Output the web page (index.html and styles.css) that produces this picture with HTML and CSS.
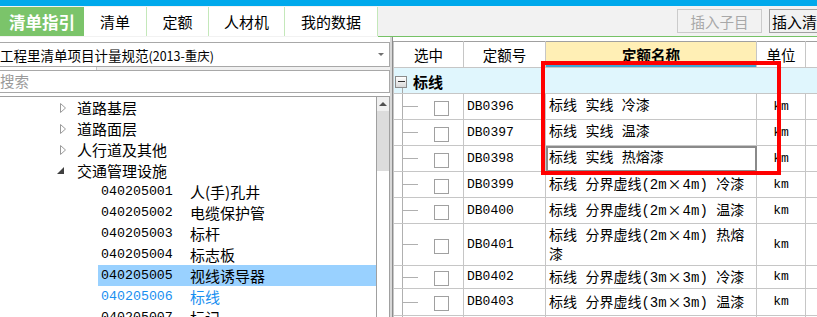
FILE: index.html
```html
<!DOCTYPE html>
<html lang="zh-CN">
<head>
    <meta charset="UTF-8">
    <title>清单指引</title>
    <link rel="stylesheet" href="styles.css">
</head>
<body>
    <div class="titlebar"></div>
    <div class="tabbar">
        <div class="tab tab-active">清单指引</div>
        <div class="tab tab-w63">清单</div>
        <div class="tab tab-w62">定额</div>
        <div class="tab tab-w76">人材机</div>
        <div class="tab tab-w93">我的数据</div>
        <div class="toolbar">
            <button class="btn btn-off" disabled>插入子目</button>
            <button class="btn btn-cut">插入清单</button>
        </div>
    </div>

    <div class="main">
        <div class="left">
            <div class="combo">
                <span>工程里清单项目计量规范<span class="combo-sub">(2013-重庆)</span></span>
                <svg class="combo-arrow" width="6" height="3" viewBox="0 0 6 3"><polygon points="0,0 6,0 3,3" fill="#707070"/></svg>
            </div>
            <div class="notch"></div>
            <div class="search">搜索</div>

            <div class="tree">
                <div class="tree-list">
                    <div class="node node-l1">
                        <svg class="twisty" width="6" height="10" viewBox="0 0 6 10"><polygon points="0.5,0.5 5.5,5 0.5,9.5" fill="none" stroke="#9a9a9a"/></svg>
                        <span>道路基层</span>
                    </div>
                    <div class="node node-l1">
                        <svg class="twisty" width="6" height="10" viewBox="0 0 6 10"><polygon points="0.5,0.5 5.5,5 0.5,9.5" fill="none" stroke="#9a9a9a"/></svg>
                        <span>道路面层</span>
                    </div>
                    <div class="node node-l1">
                        <svg class="twisty" width="6" height="10" viewBox="0 0 6 10"><polygon points="0.5,0.5 5.5,5 0.5,9.5" fill="none" stroke="#9a9a9a"/></svg>
                        <span>人行道及其他</span>
                    </div>
                    <div class="node node-l1">
                        <svg class="twisty-open" width="7" height="7" viewBox="0 0 7 7"><polygon points="7,0 7,7 0,7" fill="#404040"/></svg>
                        <span>交通管理设施</span>
                    </div>
                    <div class="node node-l2"><span class="code">040205001</span><span>人(手)孔井</span></div>
                    <div class="node node-l2"><span class="code">040205002</span><span>电缆保护管</span></div>
                    <div class="node node-l2"><span class="code">040205003</span><span>标杆</span></div>
                    <div class="node node-l2"><span class="code">040205004</span><span>标志板</span></div>
                    <div class="node node-l2 node-sel"><span class="code">040205005</span><span>视线诱导器</span></div>
                    <div class="node node-l2 node-cur"><span class="code">040205006</span><span>标线</span></div>
                    <div class="node node-l2"><span class="code">040205007</span><span>标记</span></div>
                </div>
                <div class="scrollbar">
                    <div class="sb-up">
                        <svg width="8" height="4" viewBox="0 0 8 4"><polygon points="0,4 8,4 4,0" fill="#505050"/></svg>
                    </div>
                    <div class="sb-thumb"></div>
                </div>
            </div>
        </div>

        <div class="splitter"></div>

        <div class="right">
            <table class="grid">
                <colgroup>
                    <col class="w-sel">
                    <col class="w-code">
                    <col class="w-name">
                    <col class="w-unit">
                    <col class="w-more">
                </colgroup>
                <tr class="h-head">
                    <th>选中</th>
                    <th>定额号</th>
                    <th class="th-sort">定额名称</th>
                    <th>单位</th>
                    <th></th>
                </tr>
                <tr class="h-26">
                    <td class="group" colspan="5"><span class="expander"></span><span class="group-name">标线</span></td>
                </tr>
                <tr class="h-26">
                    <td class="sel"><span class="check"></span></td>
                    <td class="code-cell">DB0396</td>
                    <td class="name-cell">标线 实线 冷漆</td>
                    <td class="unit-cell">km</td>
                    <td></td>
                </tr>
                <tr class="h-26">
                    <td class="sel"><span class="check"></span></td>
                    <td class="code-cell">DB0397</td>
                    <td class="name-cell">标线 实线 温漆</td>
                    <td class="unit-cell">km</td>
                    <td></td>
                </tr>
                <tr class="h-26">
                    <td class="sel"><span class="check"></span></td>
                    <td class="code-cell">DB0398</td>
                    <td class="name-cell cell-focus">标线 实线 热熔漆</td>
                    <td class="unit-cell">km</td>
                    <td></td>
                </tr>
                <tr class="h-26">
                    <td class="sel"><span class="check"></span></td>
                    <td class="code-cell">DB0399</td>
                    <td class="name-cell">标线 分界虚线(2m<span class="times">×</span>4m) 冷漆</td>
                    <td class="unit-cell">km</td>
                    <td></td>
                </tr>
                <tr class="h-26">
                    <td class="sel"><span class="check"></span></td>
                    <td class="code-cell">DB0400</td>
                    <td class="name-cell">标线 分界虚线(2m<span class="times">×</span>4m) 温漆</td>
                    <td class="unit-cell">km</td>
                    <td></td>
                </tr>
                <tr class="h-42">
                    <td class="sel"><span class="check"></span></td>
                    <td class="code-cell">DB0401</td>
                    <td class="name-cell">标线 分界虚线(2m<span class="times">×</span>4m) 热熔漆</td>
                    <td class="unit-cell">km</td>
                    <td></td>
                </tr>
                <tr class="h-23">
                    <td class="sel"><span class="check"></span></td>
                    <td class="code-cell">DB0402</td>
                    <td class="name-cell">标线 分界虚线(3m<span class="times">×</span>3m) 冷漆</td>
                    <td class="unit-cell">km</td>
                    <td></td>
                </tr>
                <tr class="h-27">
                    <td class="sel"><span class="check"></span></td>
                    <td class="code-cell">DB0403</td>
                    <td class="name-cell">标线 分界虚线(3m<span class="times">×</span>3m) 温漆</td>
                    <td class="unit-cell">km</td>
                    <td></td>
                </tr>
                <tr class="h-26">
                    <td class="sel"><span class="check"></span></td>
                    <td class="code-cell">DB0404</td>
                    <td class="name-cell">标线 分界虚线(3m<span class="times">×</span>3m) 热熔漆</td>
                    <td class="unit-cell">km</td>
                    <td></td>
                </tr>
            </table>
            <div class="mark"></div>
        </div>
    </div>
</body>
</html>
```

FILE: styles.css
```css
body {
    margin: 0;
    width: 817px;
    height: 317px;
    overflow: hidden;
    background: #fff;
    color: #000;
    font-family: "Noto Sans CJK SC", sans-serif;
    font-size: 14.5px;
}

/* top strip + tabs */
.titlebar {
    height: 6px;
    background: #00a9ec;
}
.tabbar {
    display: flex;
    height: 31px;
    background: #f2f2f2;
}
.tab {
    box-sizing: border-box;
    height: 29px;
    margin-top: 1px;
    border-right: 1px solid #c4e8ba;
    background: #fff;
    display: flex;
    align-items: center;
    justify-content: center;
    font-size: 15px;
    flex-shrink: 0;
}
.tab-active {
    width: 84px;
    background: #7bc46a;
    color: #fff;
    font-weight: bold;
    font-size: 16.5px;
    border-right: none;
}
.tab-w63 { width: 63px; }
.tab-w62 { width: 62px; }
.tab-w76 { width: 76px; }
.tab-w93 { width: 93px; }
.toolbar {
    flex: 1;
    display: flex;
    align-items: flex-start;
    padding-top: 3px;
    border-bottom: 1px solid #76c266;
    overflow: hidden;
}
.btn {
    box-sizing: border-box;
    height: 24px;
    padding: 0;
    background: #f2f2f2;
    border: 1px solid #a0a0a0;
    font-family: "Noto Sans CJK SC", sans-serif;
    font-size: 14.5px;
    color: #000;
    white-space: nowrap;
    overflow: hidden;
    flex-shrink: 0;
}
.btn-off {
    width: 85px;
    margin-left: auto;
    border-color: #cbcbcb;
    color: #a8a8a8;
}
.btn-cut {
    width: 48px;
    margin-left: 7px;
    padding-left: 2px;
    text-align: left;
    border-right: none;
    font-size: 15px;
}

/* layout */
.main {
    display: flex;
    height: 280px;
}
.left {
    width: 390px;
    display: flex;
    flex-direction: column;
    flex-shrink: 0;
}
.splitter {
    width: 2px;
    background: #d8d8d8;
    border-right: 1px solid #8c8c8c;
    flex-shrink: 0;
}
.right {
    position: relative;
    flex: 1;
    overflow: hidden;
    padding-top: 4px;
}

/* left pane */
.combo {
    box-sizing: border-box;
    height: 25px;
    margin-top: 5px;
    border: 1px solid #a8a8a8;
    border-left: none;
    display: flex;
    align-items: center;
    justify-content: space-between;
    padding-right: 5px;
    font-size: 13.5px;
    white-space: nowrap;
}
.combo-sub {
    font-size: 12.5px;
}
.notch {
    height: 3px;
    background: linear-gradient(to right, #fff 96px, #c8c8c8 96px, #c8c8c8 97px, #f0f0f0 97px);
}
.search {
    box-sizing: border-box;
    height: 23px;
    border: 1px solid #a8a8a8;
    border-left: none;
    color: #9a9a9a;
    line-height: 20px;
}
.tree {
    flex: 1;
    margin-top: 3px;
    border-top: 1px solid #a0a0a0;
    border-right: 1px solid #a0a0a0;
    display: flex;
    overflow: hidden;
}
.tree-list {
    flex: 1;
    font-size: 15px;
}
.node {
    height: 21px;
    display: flex;
    align-items: center;
    white-space: nowrap;
}
.node-l1 {
    padding-left: 60px;
}
.twisty {
    flex-shrink: 0;
    margin-right: 11px;
}
.twisty-open {
    flex-shrink: 0;
    margin-left: -3px;
    margin-right: 13px;
}
.node-l2 {
    margin-left: 98px;
    padding-left: 3px;
}
.code {
    width: 89px;
    flex-shrink: 0;
    font-family: "Liberation Mono", monospace;
    font-size: 13.3px;
}
.node-sel {
    background: #99d1ff;
}
.node-cur {
    color: #1a8ff0;
}
.scrollbar {
    width: 12px;
    border-left: 1px solid #a0a0a0;
    flex-shrink: 0;
}
.sb-up {
    height: 14px;
    background: #f0f0f0;
    display: flex;
    align-items: center;
    justify-content: center;
}
.sb-thumb {
    height: 60px;
    background: #dcdcdc;
}

/* grid */
.grid {
    border-collapse: collapse;
    table-layout: fixed;
    width: 442px;
}
.w-sel { width: 70px; }
.w-code { width: 82px; }
.w-name { width: 211px; }
.w-unit { width: 49px; }
.w-more { width: 30px; }
.grid th,
.grid td {
    border: 1px solid #c6c6c6;
    padding: 0 3px;
    line-height: 18px;
    overflow: hidden;
    white-space: nowrap;
}
.grid th {
    font-weight: normal;
    border-top-color: #a0a0a0;
}
.th-sort {
    background: #ffefb5;
    font-weight: bold !important;
    box-shadow: inset 0 -2px 0 #3ea6d6;
}
.h-head { height: 26px; }
.h-26 { height: 26px; }
.h-23 { height: 23px; }
.h-27 { height: 27px; }
.h-42 { height: 42px; }
.group {
    background: #e0f6fd linear-gradient(#a8a8a8, #a8a8a8) 8px 100% / 1px 6px no-repeat;
    padding-left: 1px !important;
}
.expander {
    display: inline-block;
    box-sizing: border-box;
    width: 12px;
    height: 12px;
    border: 1px solid #8c8c8c;
    vertical-align: middle;
    background: linear-gradient(#303030, #303030) center / 7px 1px no-repeat, linear-gradient(#fff, #d8d8d8);
}
.group-name {
    margin-left: 6px;
    font-weight: bold;
    font-size: 15px;
    vertical-align: middle;
}
.sel {
    padding-left: 40px !important;
    background:
        linear-gradient(#b0b0b0, #b0b0b0) 8px 0 / 1px 100% no-repeat,
        linear-gradient(#b0b0b0, #b0b0b0) 8px 50% / 16px 1px no-repeat;
}
.check {
    display: inline-block;
    box-sizing: border-box;
    width: 15px;
    height: 15px;
    border: 1px solid #a0a0a0;
    background: #fff;
    vertical-align: middle;
}
.code-cell {
    font-family: "Liberation Mono", monospace;
    font-size: 13px;
}
.name-cell {
    font-family: "Liberation Mono", "Noto Sans CJK SC", monospace;
    font-size: 14px;
    line-height: 19px !important;
    white-space: normal !important;
}
.times {
    font-family: "Noto Sans CJK SC", sans-serif;
    padding: 0 1px;
}
.unit-cell {
    text-align: center;
    font-family: "Liberation Mono", monospace;
    font-size: 13px;
}
.cell-focus {
    outline: 2px solid #8a8a8a;
    outline-offset: -2px;
}

/* red annotation box drawn over the grid */
.mark {
    position: absolute;
    left: 148px;
    top: 24px;
    width: 240px;
    height: 114px;
    box-sizing: border-box;
    border: 4px solid #ff0000;
}
```
